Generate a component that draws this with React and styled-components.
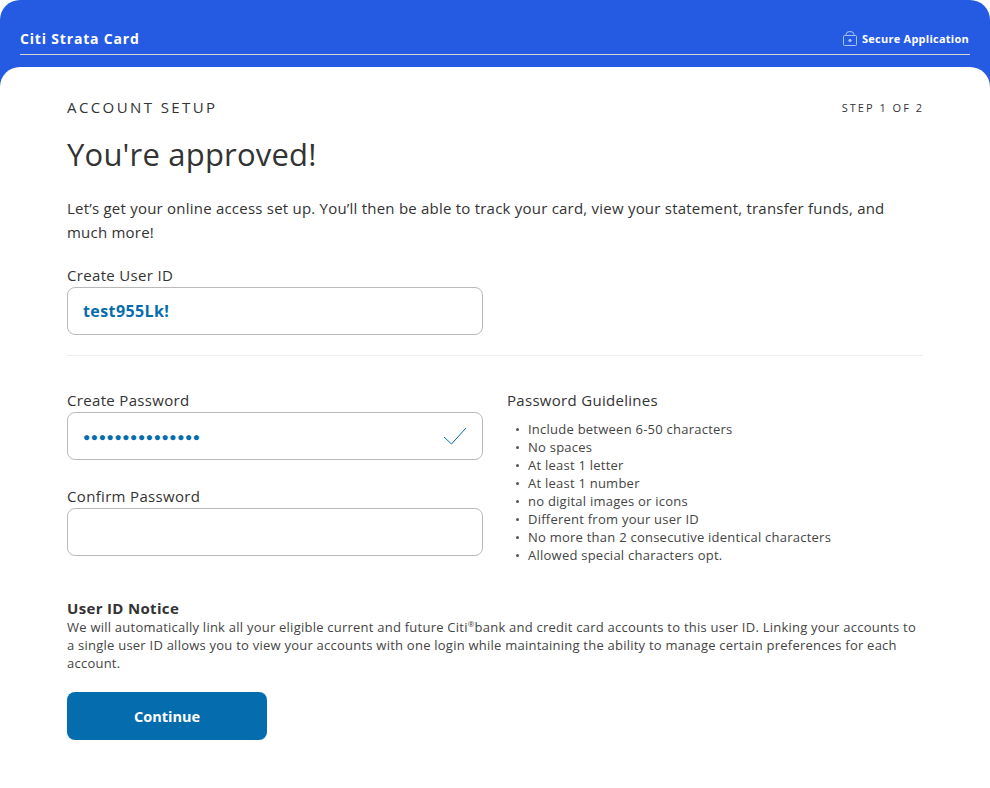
import React from "react";
import styled, { createGlobalStyle } from "styled-components";

const GlobalStyle = createGlobalStyle`
  html, body {
    margin: 0;
    padding: 0;
    background: #fff;
  }
  body {
    font-family: "Open Sans", "Liberation Sans", sans-serif;
    color: #333;
  }
`;

const Shell = styled.div`
  width: 990px;
  height: 788px;
  background: #255be3;
  border-radius: 20px 20px 0 0;
  overflow: hidden;
`;

const Header = styled.header`
  height: 67px;
  padding: 0 20px;
  box-sizing: border-box;
`;

const HeaderRow = styled.div`
  height: 55px;
  box-sizing: border-box;
  border-bottom: 1px solid #d5d5d8;
  display: flex;
  align-items: center;
  justify-content: space-between;
  padding-top: 23px;
  color: #fff;
`;

const Brand = styled.div`
  font-size: 14px;
  font-weight: 700;
  letter-spacing: 0.82px;
`;

const Secure = styled.div`
  display: flex;
  align-items: center;
  gap: 5px;
  margin-right: 1px;
  font-size: 11px;
  font-weight: 700;
  letter-spacing: 0.25px;
`;

const Card = styled.main`
  height: 721px;
  box-sizing: border-box;
  background: #fff;
  border-radius: 20px 20px 0 0;
  padding: 31px 67px 0;
`;

const TopRow = styled.div`
  display: flex;
  justify-content: space-between;
  align-items: center;
  height: 18px;
`;

const Eyebrow = styled.div`
  font-size: 15px;
  letter-spacing: 2.4px;
`;

const Step = styled.div`
  margin-right: -1px;
  font-size: 11px;
  letter-spacing: 2px;
  font-weight: 500;
`;

const Title = styled.h1`
  margin: 18px 0 0;
  font-size: 31px;
  line-height: 40px;
  font-weight: 400;
  letter-spacing: 0.2px;
`;

const Intro = styled.p`
  margin: 22px 0 0;
  font-size: 15px;
  line-height: 24px;
  letter-spacing: 0.22px;
`;

const UserIdBlock = styled.div`
  margin-top: 21px;
`;

const Label = styled.label`
  display: block;
  font-size: 15px;
  line-height: 20px;
  letter-spacing: 0.33px;
  font-weight: ${(p) => (p.$strong ? 700 : 400)};
`;

const Field = styled.div`
  width: 416px;
  height: 48px;
  box-sizing: border-box;
  margin-top: 2px;
  padding: 0 15px;
  display: flex;
  align-items: center;
  justify-content: space-between;
  border: 1px solid #b9b9b9;
  border-radius: 8px;
  background: #fff;
  color: #056dae;
  font-size: 16px;
  font-weight: 700;
  letter-spacing: 0.4px;
`;

const Dots = styled.span`
  font-size: 12px;
  letter-spacing: 0.6px;
`;

const Divider = styled.hr`
  margin: 20px 0 0;
  border: 0;
  border-top: 1px solid #eee;
`;

const Columns = styled.div`
  display: grid;
  grid-template-columns: 416px 1fr;
  column-gap: 24px;
  margin-top: 34px;
`;

const FieldStack = styled.div`
  display: flex;
  flex-direction: column;
  gap: 26px;
`;

const GuideTitle = styled.h2`
  margin: 0;
  font-size: 15px;
  line-height: 20px;
  letter-spacing: 0.3px;
  font-weight: 400;
`;

const GuideList = styled.ul`
  margin: 10px 0 0;
  padding: 0;
  list-style: none;
`;

const GuideItem = styled.li`
  position: relative;
  padding-left: 21px;
  font-size: 13px;
  line-height: 18px;
  letter-spacing: 0.24px;
  color: #444;
  &::before {
    content: "";
    position: absolute;
    left: 9px;
    top: 8px;
    width: 3px;
    height: 3px;
    border-radius: 50%;
    background: #555;
  }
`;

const Notice = styled.section`
  margin-top: 34px;
`;

const NoticeText = styled.p`
  margin: 0;
  font-size: 13px;
  line-height: 18px;
  letter-spacing: 0.235px;
  color: #444;
  sup {
    font-size: 8px;
    line-height: 0;
  }
`;

const Continue = styled.button`
  display: block;
  width: 200px;
  height: 48px;
  margin-top: 20px;
  border: 0;
  border-radius: 8px;
  background: #056dae;
  color: #fff;
  font-family: inherit;
  font-size: 14.5px;
  font-weight: 700;
`;

const LockIcon = () => (
  <svg width="14" height="15" viewBox="0 0 14 15" fill="none" stroke="#a9c1f5" strokeWidth="1">
    <rect x="0.5" y="4.5" width="13" height="10" rx="1" />
    <path d="M3 4.5V3.5a4 3 0 0 1 8 0v1" />
    <circle cx="7" cy="9.5" r="1.2" fill="#a9c1f5" />
  </svg>
);

const CheckIcon = () => (
  <svg width="24" height="18" viewBox="0 0 24 18" fill="none" stroke="#056dae" strokeWidth="1">
    <path d="M1 10l7.5 7L23 1" />
  </svg>
);

const guidelines = [
  "Include between 6-50 characters",
  "No spaces",
  "At least 1 letter",
  "At least 1 number",
  "no digital images or icons",
  "Different from your user ID",
  "No more than 2 consecutive identical characters",
  "Allowed special characters opt.",
];

export default function App() {
  return (
    <>
      <GlobalStyle />
      <Shell>
        <Header>
          <HeaderRow>
            <Brand>Citi Strata Card</Brand>
            <Secure>
              <LockIcon />
              Secure Application
            </Secure>
          </HeaderRow>
        </Header>
        <Card>
          <TopRow>
            <Eyebrow>ACCOUNT SETUP</Eyebrow>
            <Step>STEP 1 OF 2</Step>
          </TopRow>
          <Title>You're approved!</Title>
          <Intro>
            Let’s get your online access set up. You’ll then be able to track your card, view your
            statement, transfer funds, and much more!
          </Intro>
          <UserIdBlock>
            <Label>Create User ID</Label>
            <Field>test955Lk!</Field>
          </UserIdBlock>
          <Divider />
          <Columns>
            <FieldStack>
              <div>
                <Label>Create Password</Label>
                <Field>
                  <Dots>●●●●●●●●●●●●●●●</Dots>
                  <CheckIcon />
                </Field>
              </div>
              <div>
                <Label>Confirm Password</Label>
                <Field />
              </div>
            </FieldStack>
            <div>
              <GuideTitle>Password Guidelines</GuideTitle>
              <GuideList>
                {guidelines.map((g) => (
                  <GuideItem key={g}>{g}</GuideItem>
                ))}
              </GuideList>
            </div>
          </Columns>
          <Notice>
            <Label $strong>User ID Notice</Label>
            <NoticeText>
              We will automatically link all your eligible current and future Citi<sup>®</sup>bank
              and credit card accounts to this user ID. Linking your accounts to a single user ID
              allows you to view your accounts with one login while maintaining the ability to
              manage certain preferences for each account.
            </NoticeText>
          </Notice>
          <Continue>Continue</Continue>
        </Card>
      </Shell>
    </>
  );
}
